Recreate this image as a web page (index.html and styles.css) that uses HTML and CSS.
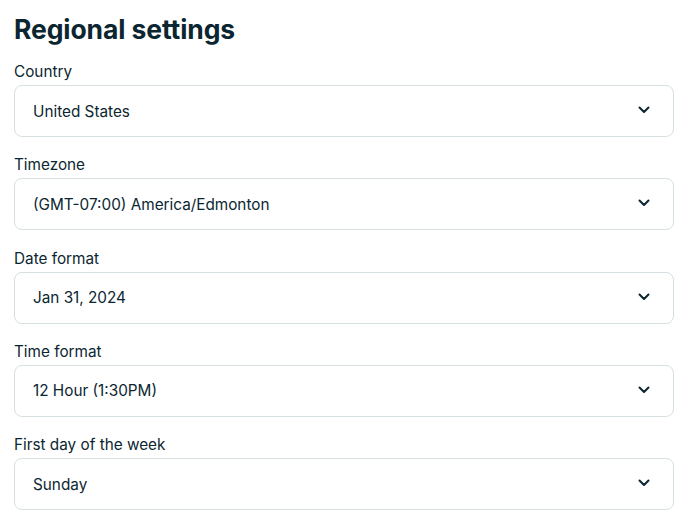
FILE: index.html
```html
<!DOCTYPE html>
<html lang="en">
<head>
<meta charset="utf-8">
<link rel="stylesheet" href="styles.css">
</head>
<body>
<main class="panel">
  <h1 class="title">Regional settings</h1>
  <div class="field">
    <label class="label">Country</label>
    <div class="select"><span>United States</span><svg class="chev" viewBox="0 0 12 8" width="12" height="8"><path d="M1.5 1.5 6 6 10.5 1.5" fill="none" stroke="currentColor" stroke-width="2" stroke-linecap="round" stroke-linejoin="round"/></svg></div>
  </div>
  <div class="field">
    <label class="label">Timezone</label>
    <div class="select"><span>(GMT-07:00) America/Edmonton</span><svg class="chev" viewBox="0 0 12 8" width="12" height="8"><path d="M1.5 1.5 6 6 10.5 1.5" fill="none" stroke="currentColor" stroke-width="2" stroke-linecap="round" stroke-linejoin="round"/></svg></div>
  </div>
  <div class="field">
    <label class="label">Date format</label>
    <div class="select"><span>Jan 31, 2024</span><svg class="chev" viewBox="0 0 12 8" width="12" height="8"><path d="M1.5 1.5 6 6 10.5 1.5" fill="none" stroke="currentColor" stroke-width="2" stroke-linecap="round" stroke-linejoin="round"/></svg></div>
  </div>
  <div class="field">
    <label class="label">Time format</label>
    <div class="select"><span>12 Hour (1:30PM)</span><svg class="chev" viewBox="0 0 12 8" width="12" height="8"><path d="M1.5 1.5 6 6 10.5 1.5" fill="none" stroke="currentColor" stroke-width="2" stroke-linecap="round" stroke-linejoin="round"/></svg></div>
  </div>
  <div class="field">
    <label class="label">First day of the week</label>
    <div class="select"><span>Sunday</span><svg class="chev" viewBox="0 0 12 8" width="12" height="8"><path d="M1.5 1.5 6 6 10.5 1.5" fill="none" stroke="currentColor" stroke-width="2" stroke-linecap="round" stroke-linejoin="round"/></svg></div>
  </div>
</main>
</body>
</html>
```
FILE: styles.css
```css
html, body {
  margin: 0;
  padding: 0;
  background: #ffffff;
}
body {
  font-family: Inter, "Noto Sans", sans-serif;
  color: #0b2631;
}
.panel {
  width: 660px;
  padding: 13px 16px 0 14px;
  display: flex;
  flex-direction: column;
}
.title {
  margin: 0 0 17px;
  font-size: 26.5px;
  line-height: 32px;
  font-weight: 700;
  letter-spacing: -0.1px;
}
.field {
  display: flex;
  flex-direction: column;
  gap: 3px;
  margin-bottom: 18.33px;
}
.label {
  font-size: 15.3px;
  line-height: 20px;
  font-weight: 400;
}
.select {
  height: 52px;
  box-sizing: border-box;
  border: 1px solid #d6dfe2;
  border-radius: 8px;
  display: flex;
  align-items: center;
  justify-content: space-between;
  padding: 0 23px 0 18px;
  font-size: 15.3px;
}
.chev {
  display: block;
  margin-top: -2px;
  color: #0b2631;
}
```
